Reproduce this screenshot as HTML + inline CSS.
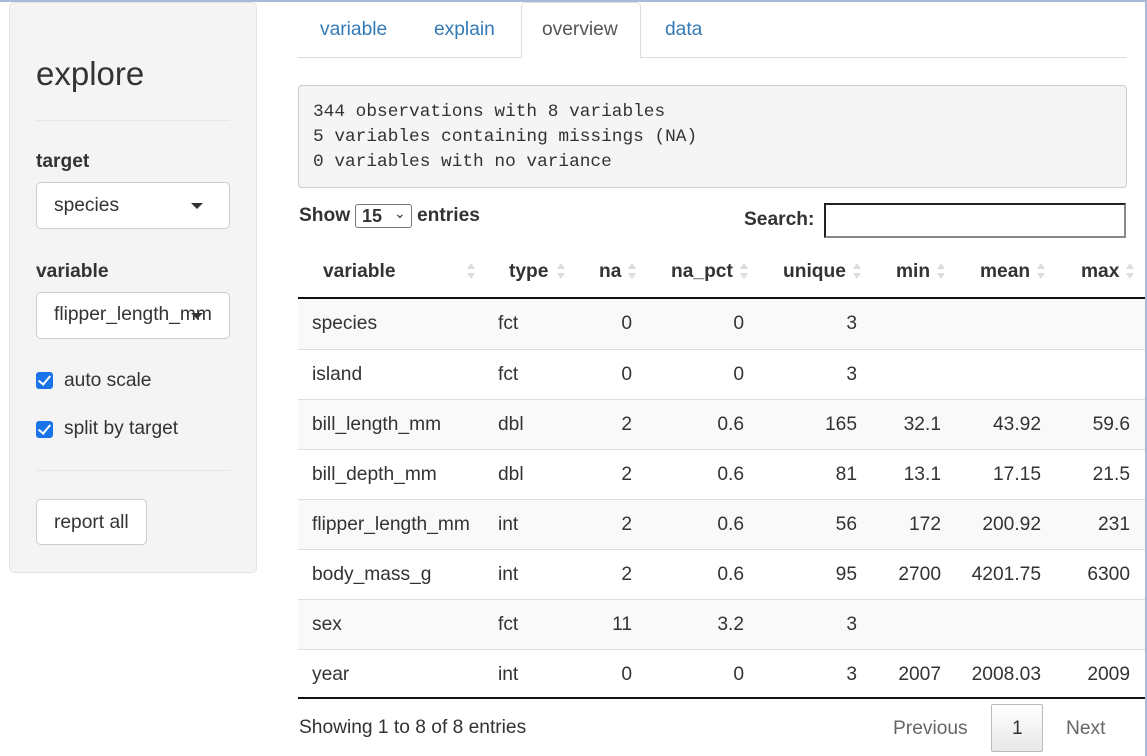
<!DOCTYPE html>
<html><head><meta charset="utf-8"><style>
*{box-sizing:border-box;margin:0;padding:0}
body{width:1147px;height:756px;overflow:hidden;background:#fff;font-family:"Liberation Sans",Arial,sans-serif;color:#333;position:relative;font-size:19.2px}
.abs{position:absolute}
.side{left:9px;top:2px;width:248px;height:571px;background:#f4f4f4;border:1px solid #e3e3e3;border-radius:5px}
.sel{background:#fff;border:1px solid #ccc;border-radius:5px;width:194px;height:47px;left:36px}
.hr{left:36px;width:194px;height:1px;background:#e6e6e6}
.lbl{font-weight:bold;font-size:19.2px;left:36px}
.cb{left:36px;width:17px;height:17px;background:#1a73e8;border-radius:3px}
.cb:after{content:"";position:absolute;left:5px;top:1px;width:5px;height:10px;border:solid #fff;border-width:0 2.5px 2.5px 0;transform:rotate(40deg)}
.tab{top:19px;font-size:19.2px;color:#337ab7}
.row{left:298px;width:847px;height:50px;border-top:1px solid #ddd}
.c{position:absolute;top:14px;font-size:19.2px}
.r{text-align:right}
.h{position:absolute;top:261px;font-weight:bold;font-size:19.2px}
.s{position:absolute;top:262px;width:8px;height:18px}
.s:before{content:"";position:absolute;left:0;top:1px;border:4px solid transparent;border-bottom:6px solid #ddd;border-top:0}
.s:after{content:"";position:absolute;left:0;top:11px;border:4px solid transparent;border-top:6px solid #ddd;border-bottom:0}
</style></head><body>
<div class="abs" style="left:0;top:0;width:1147px;height:2px;background:#a9b9d9"></div>
<div class="abs" style="right:0;top:0;width:2px;height:756px;background:#a9b9d9"></div>

<div class="abs side"></div>
<div class="abs" style="left:36px;top:55px;font-size:33px;color:#333">explore</div>
<div class="abs hr" style="top:120px"></div>
<div class="abs lbl" style="top:151px">target</div>
<div class="abs sel" style="top:182px"><span class="abs" style="left:17px;top:12px">species</span><span class="abs" style="left:154px;top:20px;border:6px solid transparent;border-top:6px solid #333;border-bottom:0"></span></div>
<div class="abs lbl" style="top:261px">variable</div>
<div class="abs sel" style="top:292px"><span class="abs" style="left:17px;top:11px;white-space:nowrap">flipper_length_mm</span><span class="abs" style="left:154px;top:20px;border:6px solid transparent;border-top:6px solid #333;border-bottom:0"></span></div>
<div class="abs cb" style="top:372px"></div><div class="abs" style="left:64px;top:370px">auto scale</div>
<div class="abs cb" style="top:421px"></div><div class="abs" style="left:64px;top:418px">split by target</div>
<div class="abs hr" style="top:470px"></div>
<div class="abs" style="left:36px;top:499px;width:111px;height:46px;background:#fff;border:1px solid #ccc;border-radius:5px"><span class="abs" style="left:17px;top:12px">report all</span></div>

<div class="abs" style="left:298px;top:57px;width:829px;height:1px;background:#ddd"></div>
<div class="abs" style="left:521px;top:2px;width:120px;height:56px;background:#fff;border:1px solid #ddd;border-bottom:none;border-radius:5px 5px 0 0"></div>
<div class="abs tab" style="left:320px">variable</div>
<div class="abs tab" style="left:434px">explain</div>
<div class="abs tab" style="left:542px;color:#555">overview</div>
<div class="abs tab" style="left:665px">data</div>

<div class="abs" style="left:298px;top:85px;width:829px;height:103px;background:#f5f5f5;border:1px solid #ccc;border-radius:4px"></div>
<pre class="abs" style="left:313px;top:100px;font-family:'Liberation Mono',monospace;font-size:17.8px;line-height:25px;color:#333">344 observations with 8 variables
5 variables containing missings (NA)
0 variables with no variance</pre>

<div class="abs" style="left:299px;top:205px;font-weight:bold">Show</div>
<div class="abs" style="left:355px;top:204px;width:57px;height:24px;border:1px solid #767676;border-radius:3px;background:#fff;font-weight:bold;font-size:18px"><span class="abs" style="left:6px;top:1px">15</span><span class="abs" style="left:38px;top:0px;font-size:14px;font-weight:normal">&#8964;</span></div>
<div class="abs" style="left:417px;top:205px;font-weight:bold">entries</div>
<div class="abs" style="left:744px;top:209px;font-weight:bold">Search:</div>
<div class="abs" style="left:824px;top:203px;width:302px;height:35px;border:2px solid #222;border-right-color:#888;border-bottom-color:#888;background:#fff"></div>

<div class="h" style="left:323px">variable</div><div class="s" style="left:467px"></div>
<div class="h" style="left:509px">type</div><div class="s" style="left:557px"></div>
<div class="h" style="left:599px">na</div><div class="s" style="left:628px"></div>
<div class="h" style="left:671px">na_pct</div><div class="s" style="left:740px"></div>
<div class="h" style="left:783px">unique</div><div class="s" style="left:853px"></div>
<div class="h" style="left:896px">min</div><div class="s" style="left:937px"></div>
<div class="h" style="left:980px">mean</div><div class="s" style="left:1037px"></div>
<div class="h" style="left:1081px">max</div><div class="s" style="left:1126px"></div>
<div class="abs" style="left:298px;top:297px;width:847px;height:2px;background:#111"></div>

<div id="rows"></div>
<div class="abs" style="left:298px;top:697px;width:847px;height:2px;background:#111"></div>

<div class="abs" style="left:299px;top:717px">Showing 1 to 8 of 8 entries</div>
<div class="abs" style="left:893px;top:718px;color:#666">Previous</div>
<div class="abs" style="left:991px;top:704px;width:52px;height:48px;border:1px solid #bbb;border-radius:2px;background:linear-gradient(#fff,#e8e8e8)"><span class="abs" style="left:20px;top:13px">1</span></div>
<div class="abs" style="left:1066px;top:718px;color:#666">Next</div>

<script>
var d=[["species","fct","0","0","3","","",""],["island","fct","0","0","3","","",""],["bill_length_mm","dbl","2","0.6","165","32.1","43.92","59.6"],["bill_depth_mm","dbl","2","0.6","81","13.1","17.15","21.5"],["flipper_length_mm","int","2","0.6","56","172","200.92","231"],["body_mass_g","int","2","0.6","95","2700","4201.75","6300"],["sex","fct","11","3.2","3","","",""],["year","int","0","0","3","2007","2008.03","2009"]];
var R=[334,446,559,643,743,832],h="";
d.forEach(function(r,i){
h+='<div class="abs row" style="top:'+(299+i*50)+'px;'+(i==0?'border-top:none;':'')+'background:'+(i%2==0?'#f9f9f9':'#fff')+'">';
h+='<span class="c" style="left:14px">'+r[0]+'</span><span class="c" style="left:200px">'+r[1]+'</span>';
for(var k=0;k<6;k++)h+='<span class="c r" style="right:'+(847-R[k])+'px">'+r[k+2]+'</span>';
h+='</div>';});
document.getElementById('rows').innerHTML=h;
</script>
</body></html>
